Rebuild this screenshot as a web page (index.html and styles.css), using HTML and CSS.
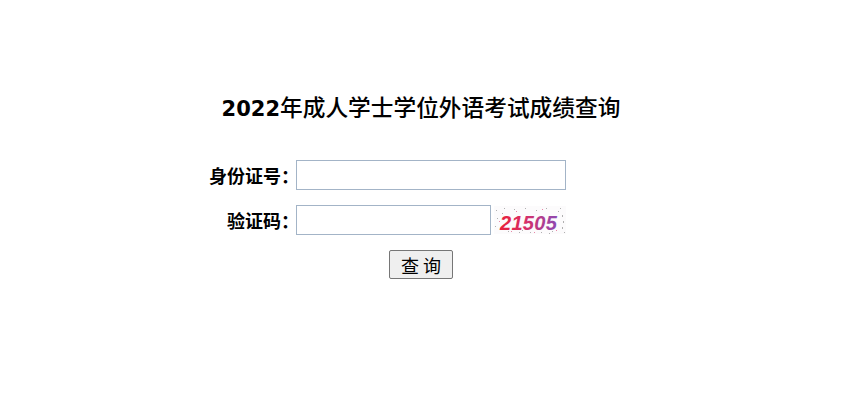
FILE: index.html
```html
<!DOCTYPE html>
<html lang="zh">
<head>
<meta charset="utf-8">
<title>2022年成人学士学位外语考试成绩查询</title>
<link rel="stylesheet" href="styles.css">
</head>
<body>
<div class="page">
  <h1 class="title"><span class="year">2022</span><span class="cn">年成人学士学位外语考试成绩查询</span></h1>
  <form class="form">
    <div class="row">
      <label class="label">身份证号<span class="colon">：</span></label>
      <input class="field field-wide" type="text">
    </div>
    <div class="row">
      <label class="label">验证码<span class="colon">：</span></label>
      <input class="field field-short" type="text">
      <svg class="captcha" width="72" height="28" viewBox="0 0 72 28">
        <defs>
          <linearGradient id="cg" x1="6" x2="62" y1="0" y2="0" gradientUnits="userSpaceOnUse">
            <stop offset="0" stop-color="#e8203c"/>
            <stop offset="0.45" stop-color="#d82e66"/>
            <stop offset="1" stop-color="#9048b0"/>
          </linearGradient>
        </defs>
        <rect width="72" height="28" fill="#fcfbfc"/>
        <g fill="#b0b0b0">
          <rect x="2" y="4" width="1" height="1"/><rect x="6" y="22" width="1" height="1"/>
          <rect x="10" y="2" width="1" height="1"/><rect x="14" y="25" width="1" height="1"/>
          <rect x="20" y="3" width="1" height="1"/><rect x="25" y="26" width="1" height="1"/>
          <rect x="31" y="2" width="1" height="1"/><rect x="36" y="26" width="1" height="1"/>
          <rect x="42" y="4" width="1" height="1"/><rect x="47" y="26" width="1" height="1"/>
          <rect x="52" y="2" width="1" height="1"/><rect x="58" y="25" width="1" height="1"/>
          <rect x="64" y="5" width="1" height="1"/><rect x="68" y="9" width="1" height="2"/>
          <rect x="69" y="15" width="1" height="2"/><rect x="68" y="21" width="1" height="2"/>
          <rect x="3" y="12" width="1" height="1"/><rect x="8" y="7" width="1" height="1"/>
          <rect x="66" y="2" width="1" height="1"/><rect x="12" y="22" width="1" height="1"/>
          <rect x="28" y="24" width="1" height="1"/><rect x="55" y="27" width="1" height="1"/>
          <rect x="70" y="26" width="1" height="1"/><rect x="1" y="20" width="1" height="1"/>
        </g>
        <g fill="#e888a8">
          <rect x="5" y="15" width="1" height="1"/><rect x="17" y="25" width="1" height="1"/>
          <rect x="40" y="26" width="1" height="1"/><rect x="62" y="24" width="1" height="1"/>
          <rect x="22" y="5" width="1" height="1"/><rect x="48" y="3" width="1" height="1"/>
        </g>
        <text x="6" y="24" class="captcha-text" fill="url(#cg)">21505</text>
      </svg>
    </div>
    <div class="actions">
      <button class="btn" type="button">查 询</button>
    </div>
  </form>
</div>
</body>
</html>
```
FILE: styles.css
```css
html, body {
  margin: 0;
  padding: 0;
  background: #ffffff;
}
body {
  font-family: "Noto Sans CJK SC", "DejaVu Sans", sans-serif;
  color: #000;
}
.page {
  width: 842px;
  padding-top: 92px;
}
.title {
  margin: 0;
  text-align: center;
  font-size: 22.7px;
  line-height: 30px;
  font-weight: normal;
}
.year {
  font-family: "DejaVu Sans", sans-serif;
  font-weight: bold;
  font-size: 21px;
}
.cn {
  font-family: "Noto Sans CJK SC", sans-serif;
  font-weight: 500;
}
.form {
  margin: 36px 0 0 0;
  display: flex;
  flex-direction: column;
  gap: 15px;
}
.row {
  display: flex;
  align-items: center;
  height: 30px;
}
.label {
  width: 296px;
  text-align: right;
  padding-right: 3px;
  box-sizing: border-box;
  font-size: 18px;
  font-weight: 700;
  white-space: nowrap;
}
.colon {
  display: inline-block;
  width: 12px;
  overflow: visible;
  text-align: left;
}
.field {
  box-sizing: border-box;
  height: 30px;
  border: 1px solid #a3b4c7;
  border-radius: 0;
  padding: 2px 4px;
  margin: 0;
  font-size: 16px;
  background: #fff;
  outline: none;
}
.field-wide { width: 270px; }
.field-short { width: 195px; }
.captcha {
  display: block;
  margin-left: 3px;
}
.captcha-text {
  font-family: "Liberation Sans", sans-serif;
  font-weight: bold;
  font-style: italic;
  font-size: 20px;
  letter-spacing: 0.3px;
}
.actions {
  display: flex;
  justify-content: center;
}
.btn {
  box-sizing: border-box;
  width: 64px;
  height: 29px;
  padding: 0;
  border: 1px solid #767676;
  border-radius: 2px;
  background: #efefef;
  font-family: "Noto Sans CJK SC", sans-serif;
  font-size: 18px;
  line-height: 1;
  color: #000;
}
```
